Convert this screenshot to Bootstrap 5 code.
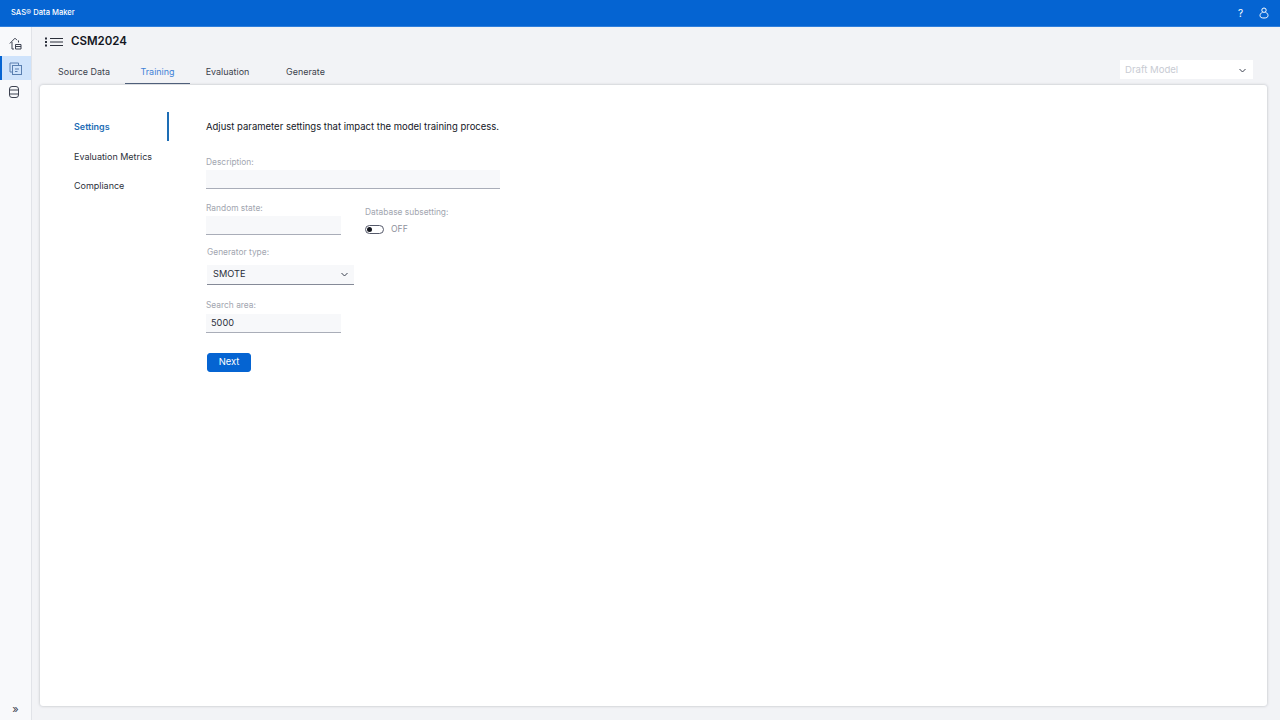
<!DOCTYPE html>
<html lang="en">
<head>
<meta charset="utf-8">
<title>SAS Data Maker</title>
<link href="https://cdn.jsdelivr.net/npm/bootstrap@5.3.0/dist/css/bootstrap.min.css" rel="stylesheet">
<style>
html,body{height:720px;overflow:hidden}
body{font-family:Inter,"Noto Sans",sans-serif;font-size:9.2px;color:#1f2330;background:#f2f3f6}
.topbar{height:27px;background:#0564d2;border-bottom:1px solid #2f7fdc;color:#fff;padding:0 11px}
.brand{font-size:7.6px;font-weight:500}
.helpmark{font-size:10px}
.shell{height:693px}
.siderail{width:32px;background:#f8f9fb;border-right:1px solid #e1e3e8;padding-top:5px}
.railbtn{height:24px;width:31px;color:#3d4250}
.railbtn.sel{background:#cfe3fb;border-left:2px solid #0564d2;color:#5a7fb0}
.railbtn.sel svg{margin-right:2px}
.dbicon{margin-right:4px}
.railbottom{height:18px;font-size:11px;color:#3d4250;padding-bottom:3px}
.workarea{padding:0 13px 0 8px;min-width:0}
.titlerow{height:29px;padding-left:4px}
.pagetitle{font-size:11.5px;font-weight:600;color:#14171f;margin:0 0 0 8px}
.tabrow{height:29px}
.tabstrip{padding-left:3px;font-size:8.95px}
.tabitem{height:28px;display:flex;align-items:center;justify-content:center;color:#3a3f4c;padding-top:4px;border-bottom:1px solid transparent}
.tabitem.on{color:#3f82d6;border-bottom-color:#4f5f7a}
.tw1{width:82px}.tw2{width:65px}.tw3{width:75px}.tw4{width:81px}
.draftsel{width:133px;height:19px;background:#fff;color:#c8cbd3;font-size:9.6px;padding:1px 7px 0 5px;margin-right:14px}
.panel{height:621px;background:#fff;border-radius:3px;box-shadow:0 0 3px rgba(30,35,50,.28);padding:27px 0 0 25px;gap:37px}
.sidenav{width:104px;font-size:8.97px}
.navline{height:29px;padding:2px 0 0 9px;display:flex;align-items:center;color:#2b2f3a}
.navline.on{color:#1d6db5;font-weight:600;border-right:2px solid #1d6db5;padding-top:0}
.formcol{padding-top:9px;width:300px}
.intro{font-size:9.5px;color:#14171f;line-height:12px;margin:0 0 24px}
.flabel{color:#a2a6b0;font-size:8.4px;line-height:11px;display:block;margin:0 0 2px}
.ffield{background:#f7f8fa;border-bottom:1px solid #a9adb8;height:19px;display:flex;align-items:center;padding:0 5px;color:#2b2f3a}
.desc{width:294px;margin-bottom:14px}
.short{width:135px}
.gentype{width:147px;height:20px;margin-left:1px;padding:0 6px;justify-content:space-between;border-bottom-color:#858a97}
.genlabel{margin-left:1px;margin-top:11px;margin-bottom:7px}
.searchlabel{margin-top:15px;margin-bottom:3px}
.sub{margin-left:24px;padding-top:4px}
.switchrow{margin-top:5px}
.switchpill{width:19px;height:9px;border:1px solid #55596a;border-radius:5px;position:relative;display:block}
.switchpill::before{content:"";position:absolute;left:1px;top:1px;width:5px;height:5px;border-radius:50%;background:#14171f}
.offtxt{color:#8d919c;font-size:8.6px;margin-left:7px}
.nextbtn{--bs-btn-bg:#0564d2;--bs-btn-border-color:#0564d2;--bs-btn-font-size:9.4px;--bs-btn-padding-y:0;--bs-btn-padding-x:0;--bs-btn-border-radius:3px;width:44px;height:19px;margin:20px 0 0 1px}
</style>
</head>
<body>
<header class="topbar d-flex align-items-center justify-content-between">
  <span class="brand">SAS® Data Maker</span>
  <div class="d-flex align-items-center gap-3">
    <span class="helpmark">?</span>
    <svg width="10" height="12" viewBox="0 0 10 12" fill="none" stroke="#fff" stroke-width="1"><circle cx="5" cy="3.2" r="2.2"/><path d="M3.6 5.2C1.8 6 1 7.3 1 8.6 1 10.4 2.6 11 5 11s4-.6 4-2.400C9 7.300 8.200 6 6.400 5.200"/></svg>
  </div>
</header>
<div class="shell d-flex">
  <nav class="siderail d-flex flex-column">
    <div class="railbtn d-flex align-items-center justify-content-center">
      <svg width="13" height="13" viewBox="0 1 13 13" fill="none" stroke="currentColor" stroke-width="1"><path d="M.8 6.500 6 1.200l2 2M3 5v7h2M6.500 12V7.500h5.500V12zM6.500 9.500h5.500M9.500 3.500V5.500"/></svg>
    </div>
    <div class="railbtn sel d-flex align-items-center justify-content-center">
      <svg width="13" height="13" viewBox="0 0 13 13" fill="none" stroke="currentColor" stroke-width="1"><path d="M3 10H1V1h8.500v2"/><rect x="3.500" y="3.500" width="9" height="9"/><path d="M6 7h4M6 9.500h2.500"/></svg>
    </div>
    <div class="railbtn d-flex align-items-center justify-content-center">
      <svg class="dbicon" width="10" height="12" viewBox="0 0 10 12" fill="none" stroke="currentColor" stroke-width="1"><rect x=".5" y=".5" width="9" height="11" rx="2.500"/><path d="M.5 4h9M.5 8h9"/></svg>
    </div>
    <div class="railbottom mt-auto d-flex align-items-end justify-content-center">»</div>
  </nav>
  <main class="workarea flex-grow-1">
    <div class="titlerow d-flex align-items-center">
      <svg width="19" height="10" viewBox="0 0 19 10" fill="none" stroke="#2b2f3a" stroke-width="1"><path d="M6 1.500h13M6 5h13M6 8.500h13"/><path d="M1 1.500h2M1 5h2M1 8.500h2" stroke-width="2"/></svg>
      <h1 class="pagetitle">CSM2024</h1>
    </div>
    <div class="tabrow d-flex justify-content-between align-items-start">
      <div class="tabstrip d-flex">
        <div class="tabitem tw1">Source Data</div>
        <div class="tabitem tw2 on">Training</div>
        <div class="tabitem tw3">Evaluation</div>
        <div class="tabitem tw4">Generate</div>
      </div>
      <div class="draftsel d-flex align-items-center justify-content-between mt-1">
        <span>Draft Model</span>
        <svg width="7" height="5" viewBox="0 0 7 5" fill="none" stroke="#3d4250" stroke-width="1"><path d="M.5 1 3.500 4l3-3"/></svg>
      </div>
    </div>
    <section class="panel d-flex">
      <div class="sidenav">
        <div class="navline on">Settings</div>
        <div class="navline">Evaluation Metrics</div>
        <div class="navline">Compliance</div>
      </div>
      <div class="formcol">
        <p class="intro">Adjust parameter settings that impact the model training process.</p>
        <label class="flabel">Description:</label>
        <div class="ffield desc"></div>
        <div class="d-flex">
          <div>
            <label class="flabel">Random state:</label>
            <div class="ffield short"></div>
          </div>
          <div class="sub">
            <label class="flabel">Database subsetting:</label>
            <div class="d-flex align-items-center switchrow"><span class="switchpill"></span><span class="offtxt">OFF</span></div>
          </div>
        </div>
        <label class="flabel genlabel">Generator type:</label>
        <div class="ffield gentype">
          <span>SMOTE</span>
          <svg width="7" height="5" viewBox="0 0 7 5" fill="none" stroke="#3d4250" stroke-width="1"><path d="M.5 1 3.500 4l3-3"/></svg>
        </div>
        <label class="flabel searchlabel">Search area:</label>
        <div class="ffield short">5000</div>
        <button type="button" class="btn btn-primary nextbtn">Next</button>
      </div>
    </section>
  </main>
</div>
</body>
</html>
